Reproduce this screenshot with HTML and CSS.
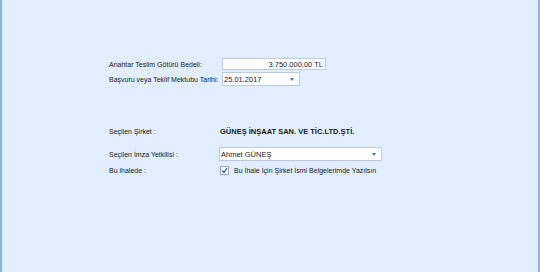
FILE: index.html
```html
<!DOCTYPE html>
<html lang="tr">
<head>
    <meta charset="UTF-8">
    <title>İhale Bilgileri</title>
    <link rel="stylesheet" href="styles.css">
</head>
<body>
    <div class="panel">
        <div class="group top">
            <div class="row">
                <div class="label">Anahtar Teslim Götürü Bedeli:</div>
                <div class="textbox amount">3.750.000,00 TL</div>
            </div>
            <div class="row">
                <div class="label">Başvuru veya Teklif Mektubu Tarihi:</div>
                <div class="combo date">
                    <span>25.01.2017</span>
                    <span class="arrow"></span>
                </div>
            </div>
        </div>
        <div class="group bottom">
            <div class="row company-row">
                <div class="label wide">Seçilen Şirket :</div>
                <div class="company">GÜNEŞ İNŞAAT SAN. VE TİC.LTD.ŞTİ.</div>
            </div>
            <div class="row signer-row">
                <div class="label wide">Seçilen İmza Yetkilisi :</div>
                <div class="combo signer">
                    <span>Ahmet GÜNEŞ</span>
                    <span class="arrow"></span>
                </div>
            </div>
            <div class="row">
                <div class="label wide">Bu ihalede :</div>
                <label class="check">
                    <span class="box">
                        <svg width="7" height="7" viewBox="0 0 7 7"><path d="M1 3.5 L3 5.5 L6 1" fill="none" stroke="#2a5ea8" stroke-width="1.3"/></svg>
                    </span>
                    Bu İhale İçin Şirket İsmi Belgelerimde Yazılsın
                </label>
            </div>
        </div>
    </div>
</body>
</html>
```

FILE: styles.css
```css
html, body {
    margin: 0;
    height: 100%;
}

body {
    background: #e1eeff;
    font-family: "Liberation Sans", Tahoma, sans-serif;
    font-size: 7px;
    color: #1a1a1a;
    overflow: hidden;
}

.panel {
    box-sizing: border-box;
    height: 272px;
    border-left: 2px solid #8db1df;
    border-right: 2px solid #8db1df;
    padding-left: 107px;
}

.group.top {
    padding-top: 58px;
}

.group.bottom {
    padding-top: 38px;
}

.row {
    display: flex;
    align-items: center;
    height: 14px;
}

.row + .row {
    margin-top: 1px;
}

.top .row:first-child {
    height: 12px;
    margin-bottom: 2px;
}

.label {
    width: 113px;
    flex: none;
    white-space: nowrap;
}

.label.wide {
    width: 110px;
}

.company-row {
    margin-bottom: 9px;
}

.signer-row {
    margin-bottom: 2px;
}

.textbox,
.combo {
    box-sizing: border-box;
    background: #fff;
    border: 1px solid #b9cbe6;
    height: 100%;
    display: flex;
    align-items: center;
    padding: 0 2px;
}

.amount {
    width: 104px;
    justify-content: flex-end;
    font-size: 7.5px;
}

.combo {
    justify-content: space-between;
    padding-left: 1px;
    font-size: 7.5px;
}

.date {
    width: 78px;
}

.signer {
    width: 163px;
}

.arrow {
    width: 0;
    height: 0;
    border-left: 2.5px solid transparent;
    border-right: 2.5px solid transparent;
    border-top: 3px solid #4a78b8;
    margin-right: 3px;
}

.company {
    font-weight: bold;
    font-size: 7.5px;
    padding-left: 1px;
}

.check {
    display: flex;
    align-items: center;
    gap: 5px;
    padding-left: 1px;
}

.box {
    box-sizing: border-box;
    width: 9px;
    height: 9px;
    background: #fff;
    border: 1px solid #8fa9cf;
    display: flex;
    align-items: center;
    justify-content: center;
}
```
